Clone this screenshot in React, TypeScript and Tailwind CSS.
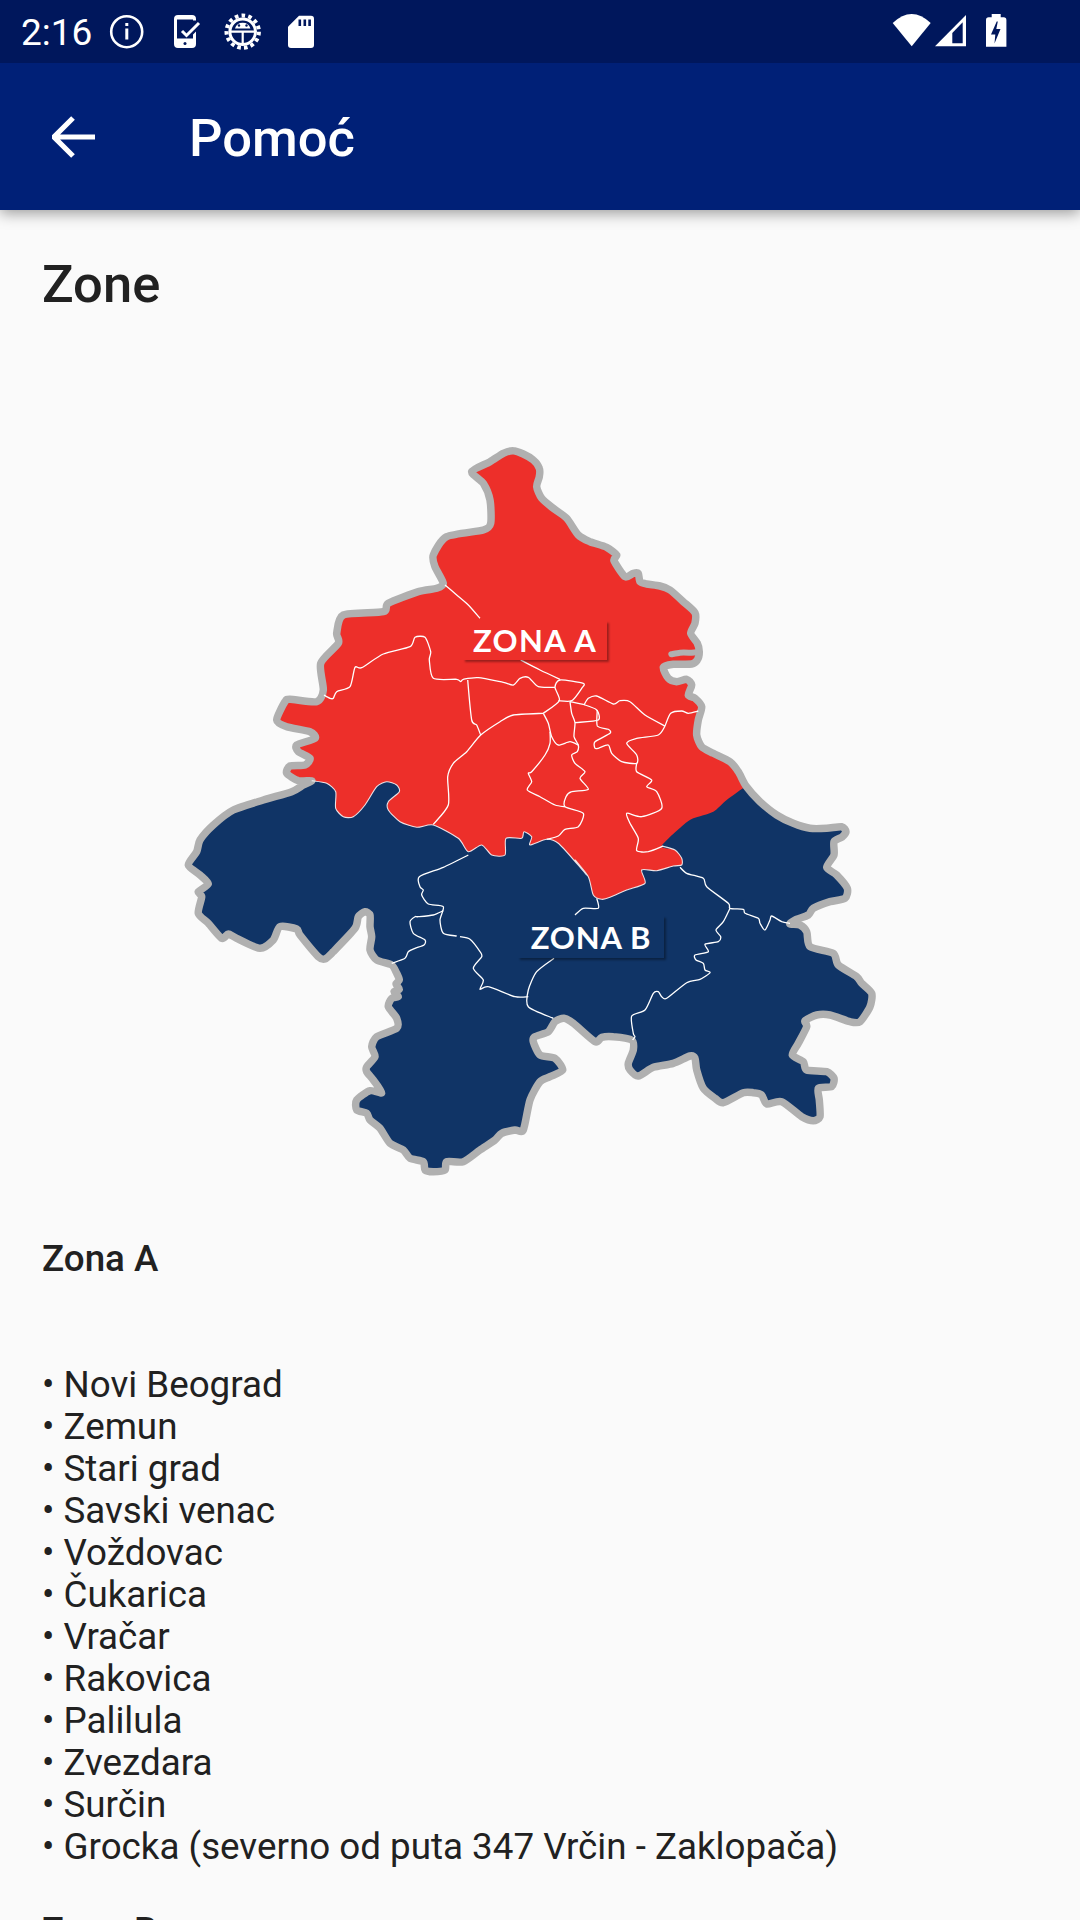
import React from "react";

type Pt = [number, number];
const T = (ox: number, oy: number, s: string): Pt[] =>
  s.trim().split(/\s+/).map((p) => {
    const [x, y] = p.split(",").map(Number);
    return [ox + x / 3, oy + y / 3] as Pt;
  });
const f = (n: number) => n.toFixed(1);
const smooth = (pts: Pt[], closed = false): string => {
  const n = pts.length;
  const at = (i: number): Pt => (closed ? pts[(i + n) % n] : pts[Math.max(0, Math.min(n - 1, i))]);
  let d = `M${f(pts[0][0])} ${f(pts[0][1])}`;
  const last = closed ? n : n - 1;
  const k = 0.12;
  for (let i = 0; i < last; i++) {
    const p0 = at(i - 1);
    const p1 = at(i);
    const p2 = at(i + 1);
    const p3 = at(i + 2);
    d += `C${f(p1[0] + (p2[0] - p0[0]) * k)} ${f(p1[1] + (p2[1] - p0[1]) * k)} ${f(p2[0] - (p3[0] - p1[0]) * k)} ${f(p2[1] - (p3[1] - p1[1]) * k)} ${f(p2[0])} ${f(p2[1])}`;
  }
  return d + (closed ? "Z" : "");
};

const A: [number, number] = [170, 430];
const B: [number, number] = [460, 430];
const C: [number, number] = [170, 780];
const D: [number, number] = [460, 780];
const a = (s: string) => T(A[0], A[1], s);
const b = (s: string) => T(B[0], B[1], s);
const c = (s: string) => T(C[0], C[1], s);
const e = (s: string) => T(D[0], D[1], s);

const top: Pt[] = [
  ...a("905,125 960,95 1000,70 1030,62 1060,72 1090,90 1108,115 1108,140 1100,170"),
  ...b("245,205 280,235 320,265 355,315 390,335 440,352 470,375 462,392 495,440 520,430 535,430 540,455 560,462 600,468 630,480 670,515 705,548 705,580 692,610 712,640 718,665 712,690 695,702 640,703 610,712 625,745 650,755 680,748 695,765 685,795 705,805 725,830 715,870 710,915 725,950 760,970 810,995 835,1025 858,1068"),
];
const south: Pt[] = [
  ...b("900,1115 950,1155 1000,1180 1050,1195 1100,1195 1145,1190"),
  ...e("1158,155 1145,172 1122,185 1122,225 1100,262 1130,285 1162,325 1155,355 1110,365 1060,385 1045,405 1005,420 990,432 1020,435 1040,455 1050,500 1120,520 1135,555 1190,590 1205,610 1235,640 1230,680 1200,725 1170,725 1110,705 1070,705 1035,722 1040,740 1015,790 997,825 1030,845 1040,870 1100,875 1122,895 1115,920 1075,925 1078,960 1080,1010 1060,1022 1025,1010 965,965 920,972 905,945 880,938 850,938 790,968 765,955 730,925 710,870 705,835 690,828 640,850 580,862 535,888 510,870 505,850 520,810 515,780 460,770 425,772 405,785 340,730 312,715 285,725 265,755 225,770 220,785 240,825 285,835 308,870 270,890 240,905 210,960 190,1050 165,1050 125,1060 105,1080"),
  ...c("930,1110 880,1145 830,1145 825,1170 790,1175 765,1170 760,1145 720,1135 700,1110 660,1090 630,1045 600,1020 590,1000 560,990 560,960 600,932 635,938 610,900 590,875 590,860 615,830 605,800 620,770 680,745 680,715 655,680 665,655 685,650 672,635 688,628 678,612 688,600 680,580 665,555 620,540 600,510 605,470 600,440 600,405 585,395 565,410 555,445 490,515 465,537 445,530 390,465 380,447 330,440 310,480 270,505 200,475 175,462 155,475 115,430 85,400 95,350 85,335 115,312 90,285 55,255 80,215 90,180 130,135 190,90 280,60 365,35 400,15"),
];
const west: Pt[] = a("425,1052 385,1052 350,1030 360,1008 405,1005 420,985 385,965 380,945 435,925 420,905 350,890 320,870 345,815 360,808 440,815 460,780 452,700 505,640 500,610 520,555 640,545 655,520 745,485 800,475 820,460 795,410 790,375 830,320 940,300 962,280 960,210 940,160");
const border: Pt[] = [
  ...a("425,1052 470,1060 497,1085 497,1135 520,1160 550,1160 585,1125 620,1070 650,1055 680,1065 688,1085 655,1115 655,1140 690,1175 740,1192 790,1185 865,1225 895,1265 935,1245 965,1275 1005,1275 1008,1225 1055,1225 1062,1205 1085,1220 1080,1245 1130,1228 1165,1240 1220,1300 1250,1335"),
  ...e("345,240 385,290 400,345 425,358 450,352 500,330 555,310 545,270 590,272 640,258 665,255 665,235 645,210 605,198"),
];
const borderEast: Pt[] = e("670,135 700,115 760,95 800,60 858,18");

const outlinePts = [...top, ...south, ...west];
const redPts = [...top, ...[...borderEast].reverse(), ...[...border].reverse(), ...west];

const lines: Pt[][] = [
  a("825,465 860,495 895,525 930,565"),
  a("1052,690 1110,720 1170,748"),
  a("462,795 480,805 490,805 500,785 540,770 555,712 575,713 640,672 720,650 735,622 765,622 782,665 778,690 790,745 860,748 872,755 880,748 925,743 1000,757 1030,765 1050,745 1075,742 1105,770 1155,772"),
  a("893,750 905,870 920,885 932,915"),
  a("790,1183 835,1125 833,1040 850,1000 890,965 932,915 990,875 1030,855 1120,850"),
  a("1120,850 1168,812 1155,772 1170,750 1240,760 1235,775 1205,812 1165,812"),
  a("1200,815 1245,825 1280,840 1285,870 1215,878"),
  a("1200,815 1205,850 1215,878 1212,920 1225,945 1222,965 1205,975 1215,1000 1245,1025 1230,1045 1255,1078 1205,1085 1188,1100 1185,1130 1240,1150 1225,1190 1185,1198 1165,1218 1130,1228"),
  a("1120,850 1135,880 1145,920 1165,945 1200,935 1225,945"),
  a("1140,905 1140,940 1125,975 1085,1025 1075,1030 1085,1055 1072,1080 1110,1100 1155,1125 1185,1130"),
  b("372,825 385,805 410,798 460,822 480,812 510,815 555,855 615,888"),
  b("615,888 632,850 665,843 685,850 715,843"),
  b("615,888 595,915 530,925 500,940 530,975 530,1000 485,995 455,970 445,945 415,955 405,955 405,935 450,910 445,898 412,888 412,840"),
  b("530,1000 530,1025 575,1050 560,1070 590,1085 605,1135 545,1160 500,1150 510,1180 535,1225 530,1262 565,1265 610,1248"),
  e("660,262 680,280 730,295 740,320 805,370 810,385 850,388 855,400 895,415 900,430 915,450 930,420 935,408 965,425 990,430"),
  e("810,385 790,425 768,450 782,470 775,485 735,493 745,515 705,525 708,540 730,550 735,570 750,578 720,598 680,608 620,655 605,650 595,635 580,640 555,690 515,708 520,760 525,770 518,780"),
  e("410,355 415,385 370,385 345,405"),
  e("282,535 230,575 205,630 205,680 280,715"),
  e("205,650 165,650 85,620 60,628 70,600 40,565 65,530 60,515 30,478 0,470"),
  c("860,468 820,460 810,420 820,380 775,372 755,345 760,330 750,320 748,290 820,262 895,225"),
  c("820,392 790,405 745,410 735,410 720,425 730,460 765,480 762,495 735,505 715,515 705,535 665,550"),
];

function BelgradeMap() {
  return (
    <svg viewBox="0 0 1080 860" width={1080} height={860} className="block">
      <g transform="translate(0 -340)">
        <path d={smooth(outlinePts, true)} fill="#103466" />
        <path d={smooth(redPts, true)} fill="#ed2f2a" />
        <path d={smooth(outlinePts, true)} fill="none" stroke="#b0b0b0" strokeWidth={7.5} strokeLinejoin="round" />
        <path d={smooth(b("716,666 695,668 660,668 634,673"))} fill="none" stroke="#b0b0b0" strokeWidth={6} strokeLinecap="round" />
        {lines.map((l, i) => (
          <path key={i} d={smooth(l)} fill="none" stroke="#ffffff" strokeWidth={1.3} strokeLinejoin="round" />
        ))}
        <path d={smooth(border)} fill="none" stroke="#ffffff" strokeWidth={1.1} opacity={0.85} />
      </g>
    </svg>
  );
}

function StatusIcons() {
  return (
    <svg viewBox="0 0 1080 63" width={1080} height={63} className="absolute left-0 top-0">
      {/* info */}
      <circle cx={126.7} cy={31.7} r={15.5} fill="none" stroke="#fff" strokeWidth={2.6} />
      <rect x={125.3} y={28.5} width={3} height={11} fill="#fff" />
      <rect x={125.3} y={23} width={3} height={3} fill="#fff" />
      {/* phone with check */}
      <path d="M178 15h14a4 4 0 0 1 4 4v1.5h-3V19.5H177v19h16V34.500l3-3V44a4 4 0 0 1-4 4h-14a4 4 0 0 1-4-4V19a4 4 0 0 1 4-4z" fill="#fff" />
      <circle cx={185} cy={43.500} r={1.5} fill="#00175c" />
      <path d="M182 31l4.500 4.500L199 23" fill="none" stroke="#fff" strokeWidth={3} />
      {/* gear */}
      <circle cx={242.700} cy={31.700} r={16.200} fill="none" stroke="#fff" strokeWidth={4} strokeDasharray="3.600 3.190" />
      <circle cx={242.700} cy={31.700} r={12.800} fill="none" stroke="#fff" strokeWidth={3} />
      <path d="M230 31.700h25.500M242.700 31.700v12" stroke="#fff" strokeWidth={2.200} />
      <path d="M235 28.500a8 8 0 0 1 15.400 0z" fill="#fff" />
      <circle cx={239} cy={25.500} r={1.200} fill="#00175c" />
      <circle cx={246.500} cy={25.500} r={1.200} fill="#00175c" />
      {/* sd */}
      <path d="M299 15.700h12a3 3 0 0 1 3 3V45a3 3 0 0 1-3 3h-20a3 3 0 0 1-3-3V26.700z" fill="#fff" />
      <path d="M298.500 19.500h2.600v6.500h-2.600zM303.500 19.500h2.600v6.500h-2.600zM308.300 19.500h2.600v6.500h-2.600z" fill="#00175c" />
      {/* wifi */}
      <path d="M911.700 46.300L892.700 23Q911.700 5 930.700 23z" fill="#fff" />
      {/* signal */}
      <path d="M935 46.300L966 15V46.300z" fill="#fff" />
      <path d="M952.300 43.300h10.400V22.300L952.300 33z" fill="#00175c" />
      {/* battery */}
      <path d="M991.700 17.300V14h9v3.300h3a2.700 2.700 0 0 1 2.700 2.700V46.700H986V20a2.700 2.700 0 0 1 2.700-2.700z" fill="#fff" />
      <path d="M996.700 21.500L991 34.500h4.300L994.500 43.500 1000.500 29h-4.200L997.800 21.500z" fill="#00175c" />
    </svg>
  );
}

const areas = [
  "Novi Beograd",
  "Zemun",
  "Stari grad",
  "Savski venac",
  "Voždovac",
  "Čukarica",
  "Vračar",
  "Rakovica",
  "Palilula",
  "Zvezdara",
  "Surčin",
  "Grocka (severno od puta 347 Vrčin - Zaklopača)",
];

export default function App() {
  return (
    <div className="relative flex h-[1920px] w-[1080px] flex-col overflow-hidden bg-[#fafafa] font-['Roboto',sans-serif] text-[#212121]">
      <div className="relative z-20 flex h-[63px] shrink-0 items-center bg-[#00175c] pl-[21px] pt-[2px] text-[37px] leading-none text-white">
        <span>2:16</span>
        <StatusIcons />
      </div>
      <div className="relative z-10 flex h-[147px] shrink-0 items-center bg-[#002077] shadow-[0_3px_14px_rgba(0,0,0,0.4)]">
        <svg viewBox="0 0 44 42" width={44} height={42} className="ml-[52px]">
          <path d="M21 2L2 21l19 19M2 21h41" fill="none" stroke="#fff" strokeWidth={5.2} />
        </svg>
        <span className="ml-[93px] pt-[3px] text-[52.5px] font-medium leading-none text-white">Pomoć</span>
      </div>
      <div className="flex shrink-0 flex-col px-[42px] pt-[46px]">
        <h1 className="text-[52.5px] font-medium leading-[56px]">Zone</h1>
      </div>
      <div className="relative mt-[28px] h-[860px] w-[1080px] shrink-0">
        <BelgradeMap />
        <div className="absolute left-[463px] top-[281px] flex h-[39px] w-[144px] items-center justify-center bg-[#ed2f2a] font-['Lato',sans-serif] text-[31px] font-bold leading-none tracking-[1.4px] text-white shadow-[2px_2px_2px_rgba(0,0,0,0.35)]">
          ZONA A
        </div>
        <div className="absolute left-[518px] top-[576px] flex h-[42px] w-[146px] items-center justify-center bg-[#103466] font-['Lato',sans-serif] text-[31px] font-bold leading-none tracking-[0.8px] text-white shadow-[2px_2px_2px_rgba(0,0,0,0.35)]">
          ZONA B
        </div>
      </div>
      <div className="flex shrink-0 flex-col px-[42px]">
        <h2 className="mt-[38px] text-[36.75px] font-medium leading-[42px]">Zona A</h2>
        <ul className="mt-[84px] text-[36.75px] leading-[42px]">
          {areas.map((t) => (
            <li key={t}>• {t}</li>
          ))}
        </ul>
        <h2 className="mt-[42px] text-[36.75px] font-medium leading-[42px]">Zona B</h2>
      </div>
    </div>
  );
}
